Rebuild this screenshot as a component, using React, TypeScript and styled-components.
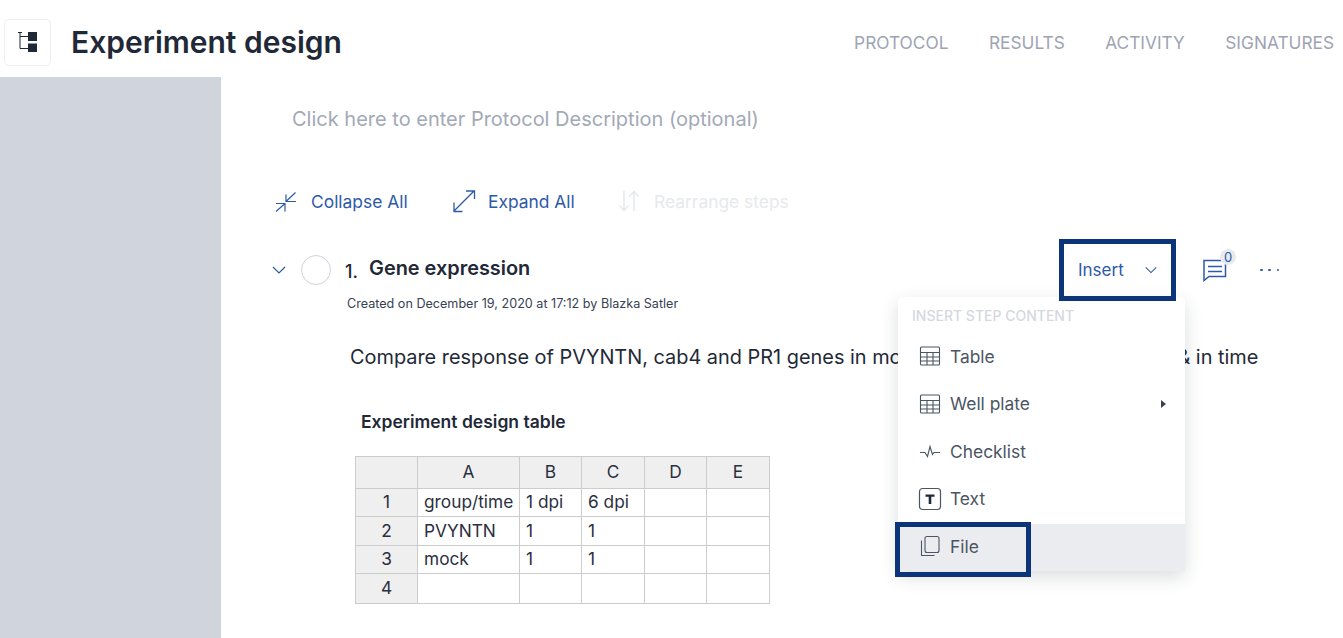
import React from 'react'
import styled, { createGlobalStyle } from 'styled-components'

const GlobalStyle = createGlobalStyle`
  html, body {
    margin: 0;
    padding: 0;
    background: #ffffff;
    overflow: hidden;
  }
  body {
    font-family: Inter, "Liberation Sans", sans-serif;
    color: #1f2937;
  }
`

const Page = styled.div`
  width: 1343px;
  height: 638px;
  overflow: hidden;
  display: flex;
  flex-direction: column;
`

const Header = styled.header`
  height: 77px;
  flex: none;
  display: flex;
  align-items: center;
  padding: 7px 0 0 4px;
  box-sizing: border-box;
`

const LogoBox = styled.div`
  width: 47px;
  height: 47px;
  box-sizing: border-box;
  border: 1px solid #eceef1;
  border-radius: 5px;
  display: flex;
  align-items: center;
  justify-content: center;
`

const PageTitle = styled.h1`
  margin: 0 0 0 20px;
  font-size: 30px;
  line-height: 38px;
  font-weight: 600;
  color: #1f2937;
  flex: 1;
  white-space: nowrap;
`

const Nav = styled.nav`
  display: flex;
  gap: 40.5px;
  margin-right: 9px;
`

const NavItem = styled.span`
  font-size: 17.3px;
  color: #9ea3b3;
  white-space: nowrap;
`

const Body = styled.div`
  flex: 1;
  display: flex;
  min-height: 0;
`

const Sidebar = styled.aside`
  width: 221px;
  flex: none;
  background: #d0d4dc;
`

const Content = styled.main`
  flex: 1;
  position: relative;
  padding: 29px 0 0 50px;
  min-width: 0;
`

const Description = styled.div`
  margin-left: 21px;
  font-size: 20px;
  line-height: 26px;
  color: #a3a9b6;
  white-space: nowrap;
`

const Toolbar = styled.div`
  display: flex;
  align-items: center;
  margin-top: 54px;
  height: 30px;
  margin-left: 4px;
`

const ToolButton = styled.div<{ $disabled?: boolean; $gap: number; $width: number }>`
  display: flex;
  align-items: center;
  gap: ${(p) => p.$gap}px;
  width: ${(p) => p.$width}px;
  font-size: 17.4px;
  white-space: nowrap;
  color: ${(p) => (p.$disabled ? '#e7e9ed' : '#2c5aa8')};
`

const StepRow = styled.div`
  display: flex;
  align-items: center;
  margin-top: 39px;
  height: 30px;
`

const Chevron = styled.div`
  width: 30px;
  display: flex;
  align-items: center;
`

const Circle = styled.div`
  width: 30px;
  height: 30px;
  box-sizing: border-box;
  border: 1px solid #cdd1da;
  border-radius: 50%;
`

const StepNumber = styled.span`
  margin: 2px 0 0 14px;
  width: 24px;
  font-size: 18px;
  font-weight: 500;
  color: #1f2937;
`

const StepTitle = styled.h2`
  margin: 0 0 4px;
  font-size: 19.9px;
  font-weight: 600;
  color: #1f2937;
  flex: 1;
  white-space: nowrap;
`

const StepActions = styled.div`
  display: flex;
  align-items: center;
  margin-right: 64px;
`

const InsertButton = styled.div`
  position: relative;
  z-index: 3;
  width: 117px;
  height: 62px;
  box-sizing: border-box;
  border: 5px solid #0b3578;
  display: flex;
  align-items: center;
  justify-content: space-between;
  padding: 0 13px 0 14px;
  font-size: 17px;
  color: #2c5aa8;
`

const CommentWrap = styled.div`
  position: relative;
  width: 24px;
  height: 24px;
  margin-left: 27px;
`

const CommentBadge = styled.span`
  position: absolute;
  top: -9px;
  right: -9px;
  width: 16px;
  height: 16px;
  border-radius: 50%;
  background: #e8eaee;
  color: #2c5aa8;
  font-size: 13px;
  line-height: 16px;
  text-align: center;
`

const More = styled.div`
  margin-left: 33px;
  width: 19px;
  display: flex;
  justify-content: space-between;
`

const Dot = styled.span`
  width: 2.5px;
  height: 2.5px;
  border-radius: 50%;
  background: #2c5aa8;
`

const Meta = styled.div`
  margin: 11px 0 0 76px;
  font-size: 12.6px;
  line-height: 16px;
  color: #374151;
  white-space: nowrap;
`

const StepText = styled.p`
  margin: 31px 0 0 79px;
  font-size: 19.9px;
  line-height: 28px;
  color: #1f2937;
  white-space: nowrap;
`

const TableTitle = styled.h3`
  margin: 39px 0 0 90px;
  font-size: 17.5px;
  line-height: 24px;
  font-weight: 600;
  color: #1f2937;
`

const Sheet = styled.table`
  margin: 22px 0 0 84px;
  border-collapse: collapse;
  table-layout: fixed;
  width: 414px;
  font-size: 17.3px;
  color: #2b2f3f;
`

const HeadCell = styled.td<{ $width?: number }>`
  box-sizing: border-box;
  border: 1px solid #cccccc;
  background: #efefef;
  text-align: center;
  padding: 0 0 2px;
  width: ${(p) => (p.$width ? `${p.$width}px` : 'auto')};
`

const Cell = styled.td`
  box-sizing: border-box;
  border: 1px solid #cccccc;
  padding: 0 6px 2px;
  white-space: nowrap;
  overflow: hidden;
`

const Row = styled.tr<{ $height: number }>`
  height: ${(p) => p.$height}px;
`

const Menu = styled.div`
  position: absolute;
  left: 677px;
  top: 220px;
  width: 287px;
  height: 274px;
  background: #ffffff;
  border-radius: 5px;
  box-shadow: 0 6px 18px rgba(31, 41, 55, 0.16);
  padding-top: 10px;
  box-sizing: border-box;
  z-index: 2;
`

const MenuHeading = styled.div`
  margin-left: 14px;
  font-size: 14px;
  line-height: 18px;
  font-weight: 500;
  color: #d5d8df;
  white-space: nowrap;
`

const MenuList = styled.div`
  margin-top: 8.5px;
`

const MenuItem = styled.div<{ $active?: boolean }>`
  position: relative;
  height: 47.5px;
  box-sizing: border-box;
  display: flex;
  align-items: center;
  padding: 0 0 2px 20px;
  gap: 8px;
  font-size: 17.4px;
  color: #4b5563;
  background: ${(p) => (p.$active ? '#ebecf0' : 'transparent')};
`

const MenuIcon = styled.span`
  width: 24px;
  height: 24px;
  display: flex;
  align-items: center;
  justify-content: center;
  flex: none;
`

const SubArrow = styled.span`
  position: absolute;
  right: 19px;
  top: 50%;
  margin-top: -5px;
  border-left: 5px solid #374151;
  border-top: 4px solid transparent;
  border-bottom: 4px solid transparent;
`

const FileHighlight = styled.div`
  position: absolute;
  left: -3px;
  top: -1.5px;
  width: 136px;
  height: 55px;
  box-sizing: border-box;
  border: 5px solid #0b3578;
`

const TreeIcon = () => (
  <svg width="20" height="20" viewBox="0 0 20 20" fill="none">
    <path d="M0 .5h4M2 .5v16M2 4.500h8M2 16.500h8" stroke="#1f2937" strokeWidth="1" />
    <rect x="10" y="0" width="9" height="9" fill="#1f2937" />
    <rect x="10" y="11.500" width="9" height="9" fill="#1f2937" />
  </svg>
)

const CollapseIcon = () => (
  <svg width="24" height="24" viewBox="0 0 24 24" fill="none" stroke="#2c5aa8" strokeWidth="1.2">
    <path d="M20.500 3.500 11 12.500M11 5.500v7h10M1 22.500l9-8M1 14.500h9v8" />
  </svg>
)

const ExpandIcon = () => (
  <svg width="24" height="24" viewBox="0 0 24 24" fill="none" stroke="#2c5aa8" strokeWidth="1.3">
    <path d="M2 22 22 2M14 2h8.500v8M2 13.500V22.500h8.500" />
  </svg>
)

const RearrangeIcon = () => (
  <svg width="22" height="24" viewBox="0 0 22 24" fill="none" stroke="#e7e9ed" strokeWidth="1.6">
    <path d="M6 2v19M1.500 16.500 6 21.500l4.500-5M16 22V3M11.500 7.500 16 2.500l4.500 5" />
  </svg>
)

const ChevronDown = ({ size }: { size: number }) => (
  <svg width={size} height={size} viewBox="0 0 16 16" fill="none" stroke="#2c5aa8" strokeWidth="1.2">
    <path d="M2 5l6 6 6-6" />
  </svg>
)

const CommentIcon = () => (
  <svg width="24" height="24" viewBox="0 0 24 24" fill="none" stroke="#2c5aa8" strokeWidth="1.5">
    <path d="M1 2.500h21.500v16H6L1 22.500zM5 8.500h14M5 13.500h14" />
  </svg>
)

const TableIcon = () => (
  <svg width="22" height="22" viewBox="0 0 22 22" fill="none" stroke="#4b5563" strokeWidth="1.1">
    <rect x="1.500" y="2" width="19" height="18" rx="1" />
    <path d="M1.500 7.500h19M1.500 12h19M1.500 16h19M8 7.500V20M14 7.500V20" />
  </svg>
)

const PulseIcon = () => (
  <svg width="22" height="22" viewBox="0 0 22 22" fill="none" stroke="#4b5563" strokeWidth="1.1">
    <path d="M1 12.500h5l2.500 4 2.500-10 2.500 8 1.500-2H21" />
  </svg>
)

const TextIcon = () => (
  <svg width="24" height="24" viewBox="0 0 24 24" fill="none">
    <rect x="1.500" y="1.500" width="21" height="21" rx="3" stroke="#4b5563" strokeWidth="1.2" />
    <path d="M7.500 7.500h9v2.300h-3.200V17h-2.600V9.800H7.500z" fill="#1f2937" />
  </svg>
)

const FileIcon = () => (
  <svg width="22" height="22" viewBox="0 0 22 22" fill="none" stroke="#4b5563" strokeWidth="1.1">
    <rect x="6" y="1.500" width="14" height="16" rx="2" />
    <path d="M2.500 5.500v15h13" />
  </svg>
)

const columns = [
  { label: '', width: 62 },
  { label: 'A', width: 102 },
  { label: 'B', width: 62 },
  { label: 'C', width: 63 },
  { label: 'D', width: 62 },
  { label: 'E', width: 63 },
]

const rows = [
  { id: '1', height: 28, cells: ['group/time', '1 dpi', '6 dpi', '', ''] },
  { id: '2', height: 29, cells: ['PVYNTN', '1', '1', '', ''] },
  { id: '3', height: 28, cells: ['mock', '1', '1', '', ''] },
  { id: '4', height: 30, cells: ['', '', '', '', ''] },
]

const menuItems = [
  { label: 'Table', icon: <TableIcon /> },
  { label: 'Well plate', icon: <TableIcon />, submenu: true },
  { label: 'Checklist', icon: <PulseIcon /> },
  { label: 'Text', icon: <TextIcon /> },
  { label: 'File', icon: <FileIcon />, active: true },
]

const App: React.FC = () => {
  return (
    <Page>
      <GlobalStyle />
      <Header>
        <LogoBox>
          <TreeIcon />
        </LogoBox>
        <PageTitle>Experiment design</PageTitle>
        <Nav>
          <NavItem>PROTOCOL</NavItem>
          <NavItem>RESULTS</NavItem>
          <NavItem>ACTIVITY</NavItem>
          <NavItem>SIGNATURES</NavItem>
        </Nav>
      </Header>
      <Body>
        <Sidebar />
        <Content>
          <Description>Click here to enter Protocol Description (optional)</Description>
          <Toolbar>
            <ToolButton $gap={12} $width={177}>
              <CollapseIcon />
              Collapse All
            </ToolButton>
            <ToolButton $gap={12} $width={166}>
              <ExpandIcon />
              Expand All
            </ToolButton>
            <ToolButton $disabled $gap={14} $width={190}>
              <RearrangeIcon />
              Rearrange steps
            </ToolButton>
          </Toolbar>
          <StepRow>
            <Chevron>
              <ChevronDown size={16} />
            </Chevron>
            <Circle />
            <StepNumber>1.</StepNumber>
            <StepTitle>Gene expression</StepTitle>
            <StepActions>
              <InsertButton>
                Insert
                <ChevronDown size={14} />
              </InsertButton>
              <CommentWrap>
                <CommentIcon />
                <CommentBadge>0</CommentBadge>
              </CommentWrap>
              <More>
                <Dot />
                <Dot />
                <Dot />
              </More>
            </StepActions>
          </StepRow>
          <Meta>Created on December 19, 2020 at 17:12 by Blazka Satler</Meta>
          <StepText>Compare response of PVYNTN, cab4 and PR1 genes in mock and PVY treated samples, &amp; in time</StepText>
          <TableTitle>Experiment design table</TableTitle>
          <Sheet>
            <tbody>
              <Row $height={32}>
                {columns.map((col) => (
                  <HeadCell key={col.label} $width={col.width}>
                    {col.label}
                  </HeadCell>
                ))}
              </Row>
              {rows.map((row) => (
                <Row key={row.id} $height={row.height}>
                  <HeadCell>{row.id}</HeadCell>
                  {row.cells.map((cell, i) => (
                    <Cell key={i}>{cell}</Cell>
                  ))}
                </Row>
              ))}
            </tbody>
          </Sheet>
          <Menu>
            <MenuHeading>INSERT STEP CONTENT</MenuHeading>
            <MenuList>
              {menuItems.map((item) => (
                <MenuItem key={item.label} $active={item.active}>
                  <MenuIcon>{item.icon}</MenuIcon>
                  {item.label}
                  {item.submenu && <SubArrow />}
                  {item.active && <FileHighlight />}
                </MenuItem>
              ))}
            </MenuList>
          </Menu>
        </Content>
      </Body>
    </Page>
  )
}

export default App
